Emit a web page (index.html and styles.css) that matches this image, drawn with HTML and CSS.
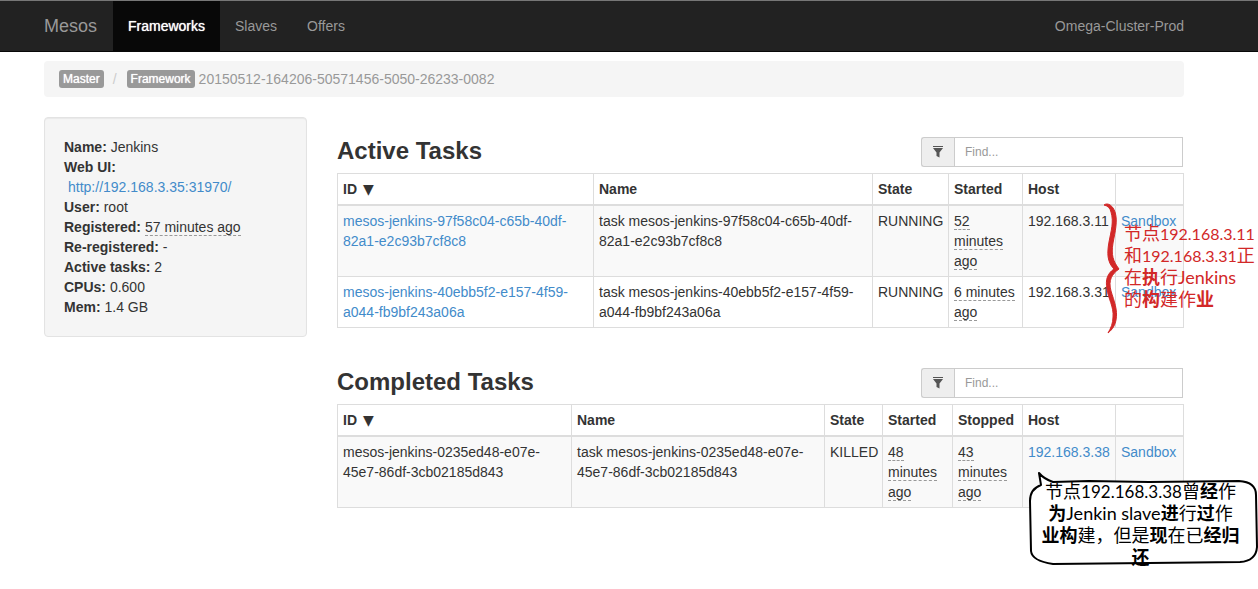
FILE: index.html
```html
<!DOCTYPE html>
<html lang="en">
<head>
<meta charset="utf-8">
<title>Mesos</title>
<link rel="stylesheet" href="styles.css">
</head>
<body>
<header class="navbar">
  <nav class="container navbar-inner">
    <a class="brand" href="#">Mesos</a>
    <a class="nav-link active" href="#">Frameworks</a>
    <a class="nav-link" href="#">Slaves</a>
    <a class="nav-link" href="#">Offers</a>
    <span class="cluster">Omega-Cluster-Prod</span>
  </nav>
</header>

<div class="container">
  <div class="breadcrumb">
    <a class="badge" href="#">Master</a>
    <span class="divider">/</span>
    <span class="badge">Framework</span>
    <span class="crumb-id">20150512-164206-50571456-5050-26233-0082</span>
  </div>

  <div class="columns">
    <aside class="well">
      <ul class="facts">
        <li><b>Name:</b> Jenkins</li>
        <li><b>Web UI:</b> <a class="ui-link" href="#">http://192.168.3.35:31970/</a></li>
        <li><b>User:</b> root</li>
        <li><b>Registered:</b> <span class="ago">57 minutes ago</span></li>
        <li><b>Re-registered:</b> -</li>
        <li><b>Active tasks:</b> 2</li>
        <li><b>CPUs:</b> 0.600</li>
        <li><b>Mem:</b> 1.4 GB</li>
      </ul>
    </aside>

    <main class="content">
      <section class="tasks">
        <div class="tasks-head">
          <h2>Active Tasks</h2>
          <label class="filter">
            <span class="filter-icon"><svg width="12" height="13" viewBox="0 0 12 13" aria-hidden="true"><path d="M1 0h10v1H1zM1 2h10L7.500 6.500V11.500L4.500 10V6.500z" fill="#555"/></svg></span>
            <input type="text" placeholder="Find..." aria-label="Find active tasks">
          </label>
        </div>
        <table>
          <colgroup><col class="c-id-active"><col><col class="c-running"><col class="c-time-active"><col class="c-host"><col class="c-sandbox"></colgroup>
          <thead>
            <tr><th>ID <span class="sort">▼</span></th><th>Name</th><th>State</th><th>Started</th><th>Host</th><th></th></tr>
          </thead>
          <tbody>
            <tr>
              <td><a href="#">mesos-jenkins-97f58c04-c65b-40df-<wbr>82a1-e2c93b7cf8c8</a></td>
              <td>task mesos-jenkins-97f58c04-c65b-40df-<wbr>82a1-e2c93b7cf8c8</td>
              <td>RUNNING</td>
              <td><span class="ago">52 minutes ago</span></td>
              <td>192.168.3.11</td>
              <td><a href="#">Sandbox</a></td>
            </tr>
            <tr>
              <td><a href="#">mesos-jenkins-40ebb5f2-e157-4f59-<wbr>a044-fb9bf243a06a</a></td>
              <td>task mesos-jenkins-40ebb5f2-e157-4f59-<wbr>a044-fb9bf243a06a</td>
              <td>RUNNING</td>
              <td><span class="ago">6 minutes ago</span></td>
              <td>192.168.3.31</td>
              <td><a href="#">Sandbox</a></td>
            </tr>
          </tbody>
        </table>
        <div class="note note-running" lang="zh">
          <svg class="brace" width="16" height="132" viewBox="0 0 16 132" aria-hidden="true"><path d="M0 2C4 -1 9 3 11 9C14 18 11 29 9 40C7 52 9 58 15 66C8 71 4 77 7 88C10 98 14 107 12 117C11 122 9 126 4 130C7 125 9 120 9 114C10 104 4 95 3 86C1 76 4 70 10 66C3 59 3 50 5 39C7 28 10 19 7 9C6 5 4 3 0 2z" fill="#d22828" stroke="#d22828"/></svg>
          <p>节点<span class="num">192.168.3.11</span><br>和<span class="num">192.168.3.31</span>正<br>在<b>执</b>行<span class="word">Jenkins</span><br>的<b>构</b>建作<b>业</b></p>
        </div>
      </section>

      <section class="tasks">
        <div class="tasks-head">
          <h2>Completed Tasks</h2>
          <label class="filter">
            <span class="filter-icon"><svg width="12" height="13" viewBox="0 0 12 13" aria-hidden="true"><path d="M1 0h10v1H1zM1 2h10L7.500 6.500V11.500L4.500 10V6.500z" fill="#555"/></svg></span>
            <input type="text" placeholder="Find..." aria-label="Find completed tasks">
          </label>
        </div>
        <table>
          <colgroup><col class="c-id-done"><col><col class="c-killed"><col class="c-time-done"><col class="c-time-done"><col class="c-host"><col class="c-sandbox"></colgroup>
          <thead>
            <tr><th>ID <span class="sort">▼</span></th><th>Name</th><th>State</th><th>Started</th><th>Stopped</th><th>Host</th><th></th></tr>
          </thead>
          <tbody>
            <tr>
              <td>mesos-jenkins-0235ed48-e07e-<wbr>45e7-86df-3cb02185d843</td>
              <td>task mesos-jenkins-0235ed48-e07e-<wbr>45e7-86df-3cb02185d843</td>
              <td>KILLED</td>
              <td><span class="ago">48 minutes ago</span></td>
              <td><span class="ago">43 minutes ago</span></td>
              <td><a href="#">192.168.3.38</a></td>
              <td><a href="#">Sandbox</a></td>
            </tr>
          </tbody>
        </table>
        <div class="note note-done" lang="zh">
          <svg class="bubble" width="229" height="94" viewBox="0 0 229 94" aria-hidden="true"><path d="M12 14L10 2Q15 8 24 11L60 10L120 11L210 10Q227 11 227 24L228 76Q227 90 211 91L120 92L24 93Q3 90 2 80L1 30Q1 18 12 14z" fill="#fff" stroke="#000" stroke-width="2" stroke-linejoin="round"/></svg>
          <p>节点<span class="num">192.168.3.38</span>曾<b>经</b>作<br><b>为</b><span class="word">Jenkin slave</span><b>进</b>行<b>过</b>作<br><b>业构</b>建，但是<b>现</b>在已<b>经归</b><br><b>还</b></p>
        </div>
      </section>
    </main>
  </div>
</div>
</body>
</html>
```
FILE: styles.css
```css
* { box-sizing: border-box; }

body {
  min-height: 100vh;
  margin: 0;
  background: #fff;
  color: #333;
  font: 14px/20px "Liberation Sans", Arial, "Noto Sans CJK SC", sans-serif;
}

a { color: #428bca; text-decoration: none; }

/* The wider right side leaves room for the notes beside the tables */
.container {
  max-width: 1200px;
  margin: 0 auto;
  padding: 0 45px 0 15px;
}

/* Top bar */
.navbar {
  margin-bottom: 9px;
  background: #222;
  border-top: 1px solid #777;
  border-bottom: 1px solid #080808;
}
.navbar-inner { display: flex; line-height: 50px; color: #999; }
.brand { padding-right: 16px; font-size: 18px; color: #999; }
.nav-link { padding: 0 15px; color: #999; }
.nav-link.active { background: #080808; color: #fff; text-shadow: 0 0 1px #fff; }
.cluster { margin-left: auto; }

/* Breadcrumb */
.breadcrumb {
  display: flex;
  align-items: center;
  margin-bottom: 20px;
  padding: 8px 15px;
  border-radius: 4px;
  background: #f5f5f5;
  color: #999;
}
.badge {
  padding: 0 4px;
  border-radius: 3px;
  background: #999;
  color: #fff;
  font-size: 12px;
  line-height: 18px;
  text-shadow: 0 0 1px #fff;
}
.divider { padding: 0 10px 0 9px; color: #ccc; }
.crumb-id { margin-left: 4px; }

/* Page columns */
.columns {
  display: grid;
  grid-template-columns: minmax(0, 263fr) minmax(0, 847fr);
  gap: 30px;
  align-items: start;
}
.well {
  padding: 19px;
  border: 1px solid #e3e3e3;
  border-radius: 4px;
  background: #f5f5f5;
  box-shadow: inset 0 1px 1px rgba(0, 0, 0, .05);
}
.facts { margin: 0; padding: 0; list-style: none; }
.ui-link { display: block; padding-left: 4px; }
.ago { border-bottom: 1px dashed #999; }

.content { padding-top: 20px; }
.tasks { position: relative; margin-bottom: 40px; }
.tasks-head {
  display: flex;
  justify-content: space-between;
  margin-bottom: 6px;
  padding-right: 1px;
}
h2 { margin: 0; font-size: 24px; line-height: 28px; }

.filter { display: flex; width: 262px; height: 30px; }
.filter-icon {
  display: flex;
  align-items: center;
  justify-content: center;
  width: 33px;
  border: 1px solid #ccc;
  border-right: 0;
  border-radius: 3px 0 0 3px;
  background: #eee;
}
.filter input {
  flex: 1;
  min-width: 0;
  padding: 5px 10px;
  border: 1px solid #ccc;
  border-radius: 0;
  font: 12px/18px "Liberation Sans", Arial, sans-serif;
}
.filter input::placeholder { color: #999; }

/* Task tables */
table { width: 100%; border-collapse: collapse; table-layout: fixed; }
th, td {
  padding: 5px;
  border: 1px solid #ddd;
  text-align: left;
  vertical-align: top;
}
th { border-bottom-width: 2px; white-space: nowrap; }
tbody tr:nth-child(odd) { background: #f9f9f9; }
.sort { margin-left: 2px; font: 14px/18px "DejaVu Sans", sans-serif; }
.c-id-active { width: 256px; }
.c-id-done { width: 234px; }
.c-running { width: 76px; }
.c-killed { width: 58px; }
.c-time-active { width: 74px; }
.c-time-done { width: 70px; }
.c-host { width: 93px; }
.c-sandbox { width: 68px; }

/* Annotations drawn over the tables */
.note {
  position: absolute;
  font: 18px/22px "Noto Sans CJK SC", sans-serif;
  white-space: nowrap;
}
.note p { margin: 0; }
.num, .word { font-family: Lato, sans-serif; line-height: 0; }
.note-running .num { font-size: 16px; }
.note-done .num { font-size: 17px; }
.note b { line-height: 0; }
.note-running {
  top: 66px;
  left: calc(100% - 80px);
  display: flex;
  gap: 4px;
  color: #d22828;
}
.note-running p { padding-top: 18px; }
.note-done {
  top: 103px;
  left: calc(100% - 155px);
  width: 229px;
  color: #000;
  text-align: center;
}
.note-done p { position: relative; padding: 8px 6px 0 0; }
.bubble { position: absolute; top: 0; left: 0; }
```
